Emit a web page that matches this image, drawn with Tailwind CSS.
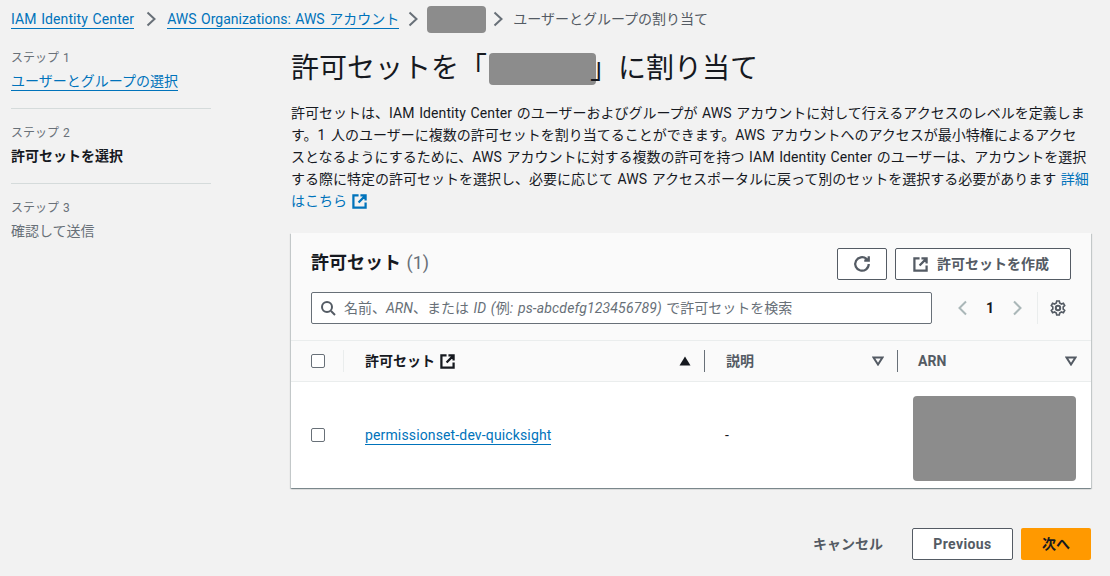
<!DOCTYPE html>
<html lang="ja">
<head>
    <meta charset="UTF-8" />
    <title>許可セットを割り当て</title>
    <script src="https://cdn.jsdelivr.net/npm/@tailwindcss/browser@4"></script>
</head>
<body class="bg-[#f2f2f2] text-[#16191f] font-['Roboto','Noto_Sans_CJK_JP',sans-serif] text-[14px] leading-[22px] [word-spacing:1px] w-[1110px] h-[576px] overflow-hidden">

    <!-- breadcrumb -->
    <nav class="h-[38px] pl-[11px] flex items-center text-[#545b64]">
        <a class="text-[#0073bb] border-b border-[#0073bb] leading-[18px] tracking-[0.1px]">IAM Identity Center</a>
        <svg class="w-[16px] h-[16px] ml-[9px] mr-[8px] text-[#687078]" viewBox="0 0 16 16" fill="none" stroke="currentColor" stroke-width="2"><path d="M4.5 1.5 11.5 8 4.5 14.5"/></svg>
        <a class="text-[#0073bb] border-b border-[#0073bb] leading-[18px]">AWS Organizations: AWS アカウント</a>
        <svg class="w-[16px] h-[16px] mx-[6px] text-[#687078]" viewBox="0 0 16 16" fill="none" stroke="currentColor" stroke-width="2"><path d="M4.5 1.5 11.5 8 4.5 14.5"/></svg>
        <span class="w-[59px] h-[27px] rounded-[4px] bg-[#8c8c8c]"></span>
        <svg class="w-[16px] h-[16px] mx-[4px] text-[#687078]" viewBox="0 0 16 16" fill="none" stroke="currentColor" stroke-width="2"><path d="M4.5 1.5 11.5 8 4.5 14.5"/></svg>
        <span class="ml-[3px] text-[14px]">ユーザーとグループの割り当て</span>
    </nav>

    <div class="flex">
        <!-- steps -->
        <aside class="w-[200px] ml-[11px] mr-[80px] shrink-0">
            <div class="pt-[9px] pb-[16px] border-b border-[#d5dbdb]">
                <p class="text-[12px] leading-[22px] text-[#687078] mb-[1px]">ステップ 1</p>
                <a class="text-[#0073bb] border-b border-[#0073bb] leading-[18px] inline-block">ユーザーとグループの選択</a>
            </div>
            <div class="pt-[13px] pb-[16px] border-b border-[#d5dbdb]">
                <p class="text-[12px] leading-[22px] text-[#687078] mb-[1px]">ステップ 2</p>
                <p class="font-bold">許可セットを選択</p>
            </div>
            <div class="pt-[13px]">
                <p class="text-[12px] leading-[22px] text-[#687078] mb-[1px]">ステップ 3</p>
                <p class="text-[#687078]">確認して送信</p>
            </div>
        </aside>

        <main class="w-[800px] shrink-0">
            <h1 class="h-[57px] flex items-center text-[28px] pt-[4px]">
                <span>許可セットを「</span>
                <span class="w-[107px] h-[32px] rounded-[4px] bg-[#8c8c8c] ml-[2px]"></span>
                <span class="-ml-[6px]">」に割り当て</span>
            </h1>
            <p class="mt-[7px] whitespace-nowrap text-[14px] leading-[22px]">
                許可セットは、<span class="tracking-[0.1px]">IAM Identity Center</span> のユーザーおよびグループが <span class="tracking-[0.1px]">AWS</span> アカウントに対して行えるアクセスのレベルを定義しま<br>
                <span class="[word-spacing:2px]">す。1 人のユーザーに複数の許可セットを割り当てることができます。<span class="tracking-[0.1px]">AWS</span> アカウントへのアクセスが最小特権によるアクセ</span><br>
                スとなるようにするために、<span class="tracking-[0.1px]">AWS</span> アカウントに対する複数の許可を持つ <span class="tracking-[0.1px]">IAM Identity Center</span> のユーザーは、アカウントを選択<br>
                する際に特定の許可セットを選択し、必要に応じて <span class="tracking-[0.1px]">AWS</span> アクセスポータルに戻って別のセットを選択する必要があります <span class="text-[#0073bb]">詳細</span><br>
                <span class="text-[#0073bb] inline-flex items-center">はこちら
                    <svg class="w-[15px] h-[15px] ml-[5px]" viewBox="0 0 16 16" fill="none" stroke="currentColor" stroke-width="2.4"><path d="M7 1.5H1.5v13h13V9M9 1.5h5.5V7M14.5 1.5 7 9"/></svg>
                </span>
            </p>

            <!-- card -->
            <section class="mt-[21px] bg-white shadow-[0_1px_1px_0_rgba(0,28,36,0.3),1px_1px_1px_0_rgba(0,28,36,0.15),-1px_1px_1px_0_rgba(0,28,36,0.15)] h-[255px]">
                <div class="h-[108px] bg-[#fafafa] border-b border-[#eaeded] pl-[20px] pr-[20px]">
                    <div class="flex items-start justify-between pt-[15px] h-[59px]">
                        <h2 class="text-[18px] leading-[30px] font-bold">許可セット <span class="font-normal text-[#687078]">(1)</span></h2>
                        <div class="flex gap-[8px]">
                            <button class="w-[50px] h-[32px] border border-[#545b64] rounded-[2px] bg-white flex items-center justify-center text-[#545b64]">
                                <svg class="w-[18px] h-[18px]" viewBox="0 0 16 16" fill="none" stroke="currentColor" stroke-width="2"><path d="M14 8a6 6 0 1 1-2-4.5L14 5M14 1v4h-4"/></svg>
                            </button>
                            <button class="w-[176px] h-[32px] border border-[#545b64] rounded-[2px] bg-white flex items-center gap-[9px] pl-[17px] font-bold text-[#545b64]">
                                <svg class="w-[15px] h-[15px]" viewBox="0 0 16 16" fill="none" stroke="currentColor" stroke-width="2.4"><path d="M7 1.5H1.5v13h13V9M9 1.5h5.5V7M14.5 1.5 7 9"/></svg>
                                <span class="text-[14px]">許可セットを作成</span>
                            </button>
                        </div>
                    </div>
                    <div class="flex items-center">
                        <div class="w-[621px] h-[32px] border border-[#687078] rounded-[2px] bg-white flex items-center pl-[8px] text-[#687078] shrink-0">
                            <svg class="w-[16px] h-[16px] mr-[8px] text-[#545b64]" viewBox="0 0 16 16" fill="none" stroke="currentColor" stroke-width="2"><circle cx="7" cy="7" r="5"/><path d="m11 11 4 4"/></svg>
                            <span class="italic whitespace-nowrap"><span class="not-italic">名前、</span>ARN<span class="not-italic">、または</span> <span class="tracking-[0.15px]">ID (<span class="not-italic">例</span>: ps-abcdefg123456789)</span> <span class="not-italic">で許可セットを検索</span></span>
                        </div>
                        <div class="flex items-center ml-[24px] text-[#aab7b8]">
                            <svg class="w-[16px] h-[16px] -ml-[1px]" viewBox="0 0 16 16" fill="none" stroke="currentColor" stroke-width="2"><path d="M11 1.5 4.5 8 11 14.5"/></svg>
                            <span class="font-bold text-[#16191f] ml-[15px] mr-[13px] w-[8px] text-center">1</span>
                            <svg class="w-[16px] h-[16px] ml-[2px]" viewBox="0 0 16 16" fill="none" stroke="currentColor" stroke-width="2"><path d="M5 1.5 11.5 8 5 14.5"/></svg>
                        </div>
                        <div class="ml-[12px] h-[32px] pl-[12px] border-l border-[#eaeded] flex items-center text-[#545b64]">
                            <svg class="w-[16px] h-[16px]" viewBox="0 0 16 16" fill="none" stroke="currentColor" stroke-width="2"><circle cx="8" cy="8" r="2.2"/><path d="M6.7 1h2.6l.4 2 1.8 1 1.9-.7 1.3 2.3-1.5 1.3v2.2l1.5 1.3-1.3 2.3-1.9-.7-1.8 1-.4 2H6.7l-.4-2-1.8-1-1.9.7-1.3-2.3 1.5-1.3V6.9L1.3 5.6l1.3-2.3 1.9.7 1.8-1z" stroke-width="1.6"/></svg>
                        </div>
                    </div>
                </div>

                <!-- table header -->
                <div class="grid grid-cols-[53px_360px_193px_194px] h-[41px] bg-[#fafafa] border-b border-[#eaeded] items-center font-bold text-[14px]">
                    <div class="pl-[20px] h-[22px] border-r border-[#eaeded] flex items-center">
                        <span class="w-[14px] h-[14px] rounded-[2px] border border-[#687078] bg-white"></span>
                    </div>
                    <div class="pl-[21px] pr-[13px] flex items-center">
                        <span class="-mt-[1px]">許可セット</span>
                        <svg class="w-[15px] h-[15px] ml-[5px]" viewBox="0 0 16 16" fill="none" stroke="currentColor" stroke-width="2.4"><path d="M7 1.5H1.5v13h13V9M9 1.5h5.5V7M14.5 1.5 7 9"/></svg>
                        <svg class="w-[12px] h-[10px] ml-auto" viewBox="0 0 12 10" fill="currentColor"><path d="M6 0.5 11.5 9.5H.5z"/></svg>
                    </div>
                    <div class="pl-[21px] pr-[13px] h-[22px] border-l border-[#687078] flex items-center text-[#545b64]">
                        <span>説明</span>
                        <svg class="w-[12px] h-[10px] ml-auto" viewBox="0 0 12 10" fill="none" stroke="currentColor" stroke-width="2"><path d="M1.5 1.5h9L6 8.5z"/></svg>
                    </div>
                    <div class="pl-[20px] pr-[14px] h-[22px] border-l border-[#687078] flex items-center text-[#545b64]">
                        <span>ARN</span>
                        <svg class="w-[12px] h-[10px] ml-auto" viewBox="0 0 12 10" fill="none" stroke="currentColor" stroke-width="2"><path d="M1.5 1.5h9L6 8.5z"/></svg>
                    </div>
                </div>

                <!-- table row -->
                <div class="grid grid-cols-[53px_360px_193px_194px] h-[106px] items-center">
                    <div class="pl-[20px] flex items-center">
                        <span class="w-[14px] h-[14px] rounded-[2px] border border-[#687078] bg-white"></span>
                    </div>
                    <div class="pl-[21px]">
                        <a class="text-[#0073bb] border-b border-[#0073bb] leading-[18px] inline-block tracking-[0.14px]">permissionset-dev-quicksight</a>
                    </div>
                    <div class="pl-[21px]">-</div>
                    <div class="pl-[16px] pt-[7px]">
                        <div class="w-[163px] h-[85px] rounded-[4px] bg-[#8c8c8c]"></div>
                    </div>
                </div>
            </section>

            <!-- actions -->
            <div class="mt-[40px] flex items-center justify-end">
                <a class="font-bold text-[#545b64] mr-[29px]">キャンセル</a>
                <button class="w-[101px] h-[32px] border border-[#545b64] rounded-[2px] bg-white font-bold text-[#545b64] mr-[8px] tracking-[0.4px]">Previous</button>
                <button class="w-[70px] h-[32px] rounded-[2px] bg-[#ff9900] font-bold text-[#16191f]">次へ</button>
            </div>
        </main>
    </div>

</body>
</html>
